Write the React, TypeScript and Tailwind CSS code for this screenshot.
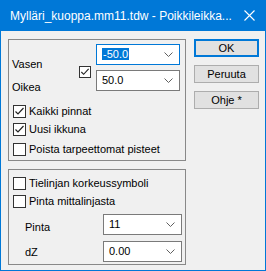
import React from 'react';

const Chevron: React.FC = () => (
  <svg width="9" height="5" viewBox="0 0 9 5" className="shrink-0">
    <path d="M0.5 0.5 L4.5 4.5 L8.5 0.5" fill="none" stroke="#606060" strokeWidth="1" />
  </svg>
);

const Check: React.FC<{ size?: number }> = ({ size = 11 }) => (
  <svg width={size} height={size} viewBox="0 0 11 11">
    <path d="M1.5 5.5 L4 8 L9.5 2" fill="none" stroke="#222" strokeWidth="1.2" />
  </svg>
);

const Combo: React.FC<{ value: string; w: string; focused?: boolean }> = ({ value, w, focused }) => (
  <div
    className={`${w} h-[21px] bg-white flex items-center pl-[5px] pr-[6px] border ${
      focused ? 'border-[#0078d7]' : 'border-[#7a7a7a]'
    }`}
  >
    <span className="flex-1">
      {focused ? (
        <span className="bg-[#0078d7] text-white px-[1px]">{value}</span>
      ) : (
        <span>{value}</span>
      )}
    </span>
    <Chevron />
  </div>
);

const CheckRow: React.FC<{ label: string; checked?: boolean; className?: string }> = ({
  label,
  checked,
  className = '',
}) => (
  <div className={`flex items-center gap-[3px] h-[13px] ${className}`}>
    <div className="w-[13px] h-[13px] border border-[#333] bg-white flex items-center justify-center">
      {checked && <Check />}
    </div>
    <span className="leading-[13px]">{label}</span>
  </div>
);

export default function App() {
  return (
    <div className="w-[266px] h-[271px] flex flex-col font-['Liberation_Sans',Arial,sans-serif] text-[11px] text-black">
      {/* title bar */}
      <div className="h-[31px] bg-[#0078d7] flex items-center pl-[10px] pr-[11px] text-white text-[12px]">
        <span className="flex-1 whitespace-nowrap">Mylläri_kuoppa.mm11.tdw - Poikkileikka...</span>
        <svg width="11" height="11" viewBox="0 0 11 11">
          <path d="M0.5 0.5 L10.5 10.5 M10.5 0.5 L0.5 10.5" stroke="white" strokeWidth="1.1" />
        </svg>
      </div>

      <div className="flex-1 bg-[#f0f0f0] border-x border-b border-[#0078d7] flex pl-[7px] pt-[8px]">
        <div className="w-[178px] flex flex-col">
          {/* group 1 */}
          <div className="h-[122px] border border-[#888] flex flex-col pl-[4px]">
            <div className="flex h-[51px] mt-[4px]">
              <div className="w-[67px] flex flex-col -ml-[1px]">
                <span className="mt-[14px] leading-[13px]">Vasen</span>
                <span className="mt-[10px] leading-[13px]">Oikea</span>
              </div>
              <div className="w-[17px] flex flex-col">
                <div className="mt-[22px] w-[12px] h-[12px] border border-[#333] bg-white flex items-center justify-center">
                  <Check size={10} />
                </div>
              </div>
              <div className="flex flex-col gap-[5px]">
                <Combo value="-50.0" w="w-[84px]" focused />
                <Combo value="50.0" w="w-[84px]" />
              </div>
            </div>
            <CheckRow className="mt-[10px]" label="Kaikki pinnat" checked />
            <CheckRow className="mt-[5px]" label="Uusi ikkuna" checked />
            <CheckRow className="mt-[7px]" label="Poista tarpeettomat pisteet" />
          </div>

          {/* group 2 */}
          <div className="mt-[8px] h-[96px] border border-[#888] flex flex-col pl-[4px]">
            <CheckRow className="mt-[7px]" label="Tielinjan korkeussymboli" />
            <CheckRow className="mt-[5px]" label="Pinta mittalinjasta" />
            <div className="flex items-center mt-[5px]">
              <span className="w-[90px] pl-[12px] pt-[6px]">Pinta</span>
              <Combo value="11" w="w-[79px]" />
            </div>
            <div className="flex items-center mt-[5px]">
              <span className="w-[90px] pl-[12px] pt-[2px]">dZ</span>
              <Combo value="0.00" w="w-[79px]" />
            </div>
          </div>
        </div>

        {/* buttons */}
        <div className="ml-[8px] w-[65px] flex flex-col gap-[8px]">
          <button className="h-[18px] bg-[#e1e1e1] border-2 border-[#0078d7] flex items-center justify-center">OK</button>
          <button className="h-[18px] bg-[#e1e1e1] border border-[#adadad] flex items-center justify-center">Peruuta</button>
          <button className="h-[18px] bg-[#e1e1e1] border border-[#adadad] flex items-center justify-center">Ohje *</button>
        </div>
      </div>
    </div>
  );
}
